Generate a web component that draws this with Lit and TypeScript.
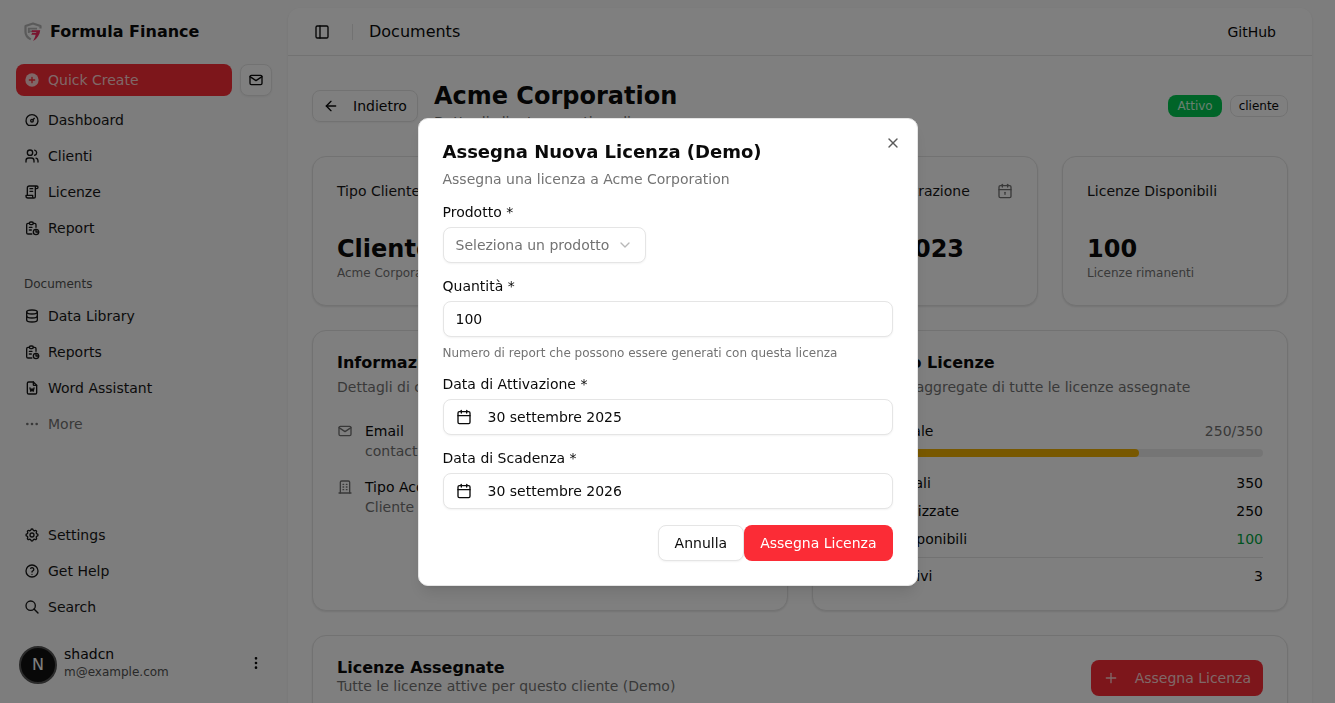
import { LitElement, html, css, svg } from 'lit';
import { customElement } from 'lit/decorators.js';

const ICONS: Record<string, string[]> = {
  mail: ['M5 5h14a2 2 0 0 1 2 2v10a2 2 0 0 1 -2 2h-14a2 2 0 0 1 -2 -2v-10a2 2 0 0 1 2 -2z', 'M3 7l9 6l9 -6'],
  dashboard: ['M12 13m-2 0a2 2 0 1 0 4 0a2 2 0 1 0 -4 0', 'M13.45 11.55l2.05 -2.05', 'M6.4 20a9 9 0 1 1 11.2 0z'],
  users: ['M9 7m-4 0a4 4 0 1 0 8 0a4 4 0 1 0 -8 0', 'M3 21v-2a4 4 0 0 1 4 -4h4a4 4 0 0 1 4 4v2', 'M16 3.13a4 4 0 0 1 0 7.75', 'M21 21v-2a4 4 0 0 0 -3 -3.85'],
  license: ['M15 21h-9a3 3 0 0 1 -3 -3v-1h10v2a2 2 0 0 0 4 0v-14a2 2 0 1 1 2 2h-2m2 -4h-11a3 3 0 0 0 -3 3v11', 'M9 7l4 0', 'M9 11l4 0'],
  report: ['M8 5h-2a2 2 0 0 0 -2 2v12a2 2 0 0 0 2 2h5.697', 'M18 14v4h4', 'M18 11v-4a2 2 0 0 0 -2 -2h-2', 'M8 3m0 2a2 2 0 0 1 2 -2h2a2 2 0 0 1 2 2v0a2 2 0 0 1 -2 2h-2a2 2 0 0 1 -2 -2z', 'M18 18m-4 0a4 4 0 1 0 8 0a4 4 0 1 0 -8 0', 'M8 11h4', 'M8 15h3'],
  database: ['M12 6m-8 0a8 3 0 1 0 16 0a8 3 0 1 0 -16 0', 'M4 6v6a8 3 0 0 0 16 0v-6', 'M4 12v6a8 3 0 0 0 16 0v-6'],
  word: ['M14 3v4a1 1 0 0 0 1 1h4', 'M17 21h-10a2 2 0 0 1 -2 -2v-14a2 2 0 0 1 2 -2h7l5 5v11a2 2 0 0 1 -2 2z', 'M9 12l1.333 5l1.667 -4l1.667 4l1.333 -5'],
  dots: ['M5 12m-1 0a1 1 0 1 0 2 0a1 1 0 1 0 -2 0', 'M12 12m-1 0a1 1 0 1 0 2 0a1 1 0 1 0 -2 0', 'M19 12m-1 0a1 1 0 1 0 2 0a1 1 0 1 0 -2 0'],
  dotsV: ['M12 5m-1 0a1 1 0 1 0 2 0a1 1 0 1 0 -2 0', 'M12 12m-1 0a1 1 0 1 0 2 0a1 1 0 1 0 -2 0', 'M12 19m-1 0a1 1 0 1 0 2 0a1 1 0 1 0 -2 0'],
  settings: ['M10.325 4.317c.426 -1.756 2.924 -1.756 3.35 0a1.724 1.724 0 0 0 2.573 1.066c1.543 -.94 3.31 .826 2.37 2.37a1.724 1.724 0 0 0 1.065 2.572c1.756 .426 1.756 2.924 0 3.35a1.724 1.724 0 0 0 -1.066 2.573c.94 1.543 -.826 3.31 -2.37 2.37a1.724 1.724 0 0 0 -2.572 1.065c-.426 1.756 -2.924 1.756 -3.35 0a1.724 1.724 0 0 0 -2.573 -1.066c-1.543 .94 -3.31 -.826 -2.37 -2.37a1.724 1.724 0 0 0 -1.065 -2.572c-1.756 -.426 -1.756 -2.924 0 -3.35a1.724 1.724 0 0 0 1.066 -2.573c-.94 -1.543 .826 -3.31 2.37 -2.37c1 .608 2.296 .07 2.572 -1.065z', 'M9 12a3 3 0 1 0 6 0a3 3 0 0 0 -6 0'],
  help: ['M12 12m-9 0a9 9 0 1 0 18 0a9 9 0 1 0 -18 0', 'M12 17l0 .01', 'M12 13.5a1.5 1.5 0 0 1 1 -1.5a2.6 2.6 0 1 0 -3 -4'],
  search: ['M10 10m-7 0a7 7 0 1 0 14 0a7 7 0 1 0 -14 0', 'M21 21l-6 -6'],
  panel: ['M5 3h14a2 2 0 0 1 2 2v14a2 2 0 0 1 -2 2h-14a2 2 0 0 1 -2 -2v-14a2 2 0 0 1 2 -2z', 'M9 3v18'],
  arrowLeft: ['m12 19-7-7 7-7', 'M19 12H5'],
  x: ['M18 6 6 18', 'm6 6 12 12'],
  calendar: ['M8 2v4', 'M16 2v4', 'M5 4h14a2 2 0 0 1 2 2v14a2 2 0 0 1 -2 2h-14a2 2 0 0 1 -2 -2v-14a2 2 0 0 1 2 -2z', 'M3 10h18'],
  calendarDay: ['M8 2v4', 'M16 2v4', 'M5 4h14a2 2 0 0 1 2 2v14a2 2 0 0 1 -2 2h-14a2 2 0 0 1 -2 -2v-14a2 2 0 0 1 2 -2z', 'M3 10h18', 'M12 14v3'],
  chevron: ['m6 9 6 6 6-6'],
  building: ['M3 21l18 0', 'M9 8l1 0', 'M9 12l1 0', 'M9 16l1 0', 'M14 8l1 0', 'M14 12l1 0', 'M14 16l1 0', 'M5 21v-16a2 2 0 0 1 2 -2h10a2 2 0 0 1 2 2v16'],
  plus: ['M5 12h14', 'M12 5v14'],
};

const icon = (name: string, size = 16, width = 2) => html`
  <svg class="icon" width=${size} height=${size} viewBox="0 0 24 24" fill="none" stroke="currentColor"
    stroke-width=${width} stroke-linecap="round" stroke-linejoin="round">
    ${ICONS[name].map((d) => svg`<path d=${d}></path>`)}
  </svg>
`;

const NAV_MAIN = [
  ['dashboard', 'Dashboard'],
  ['users', 'Clienti'],
  ['license', 'Licenze'],
  ['report', 'Report'],
];
const NAV_DOCS = [
  ['database', 'Data Library'],
  ['report', 'Reports'],
  ['word', 'Word Assistant'],
];
const NAV_FOOT = [
  ['settings', 'Settings'],
  ['help', 'Get Help'],
  ['search', 'Search'],
];

const STATS = [
  { title: 'Tipo Cliente', value: 'Cliente', note: 'Acme Corporation', icon: 'users' },
  { title: 'Licenze Totali', value: '350', note: 'Licenze assegnate', icon: 'license' },
  { title: 'Data Registrazione', value: 'Mar 2023', note: 'Cliente dal', icon: 'calendarDay' },
  { title: 'Licenze Disponibili', value: '100', note: 'Licenze rimanenti', icon: '' },
];

@customElement('app-root')
export class AppRoot extends LitElement {
  static styles = css`
    :host {
      display: block;
      height: 703px;
      overflow: hidden;
      position: relative;
      font-family: 'DejaVu Sans', sans-serif;
      font-size: 14px;
      line-height: 20px;
      color: #0a0a0a;
      background: #fafafa;
    }

    * { box-sizing: border-box; }
    .icon { flex: none; display: block; }

    .shell { display: flex; height: 703px; }

    /* sidebar */
    .sidebar {
      width: 288px;
      flex: none;
      display: flex;
      flex-direction: column;
      padding: 16px;
    }
    .brand {
      display: flex;
      align-items: center;
      gap: 7px;
      height: 30px;
      padding: 2px 0 0 7px;
      font-size: 16px;
      font-weight: 700;
    }
    .quick {
      display: flex;
      gap: 8px;
      margin-top: 18px;
      margin-bottom: 8px;
    }
    .quick-btn {
      flex: 1;
      height: 32px;
      display: flex;
      align-items: center;
      gap: 8px;
      padding-left: 8px;
      border-radius: 8px;
      background: #fb2c36;
    }
    .quick-btn span { color: #ffd0d0; }
    .mail-btn {
      width: 32px;
      height: 32px;
      display: grid;
      place-items: center;
      border: 1px solid #e5e5e5;
      border-radius: 8px;
      background: #fff;
      box-shadow: 0 1px 2px rgba(0, 0, 0, 0.05);
    }
    .nav { display: flex; flex-direction: column; gap: 4px; }
    .nav-item {
      height: 32px;
      display: flex;
      align-items: center;
      gap: 8px;
      padding-left: 8px;
      color: #171717;
    }
    .nav-item.muted { color: #737373; }
    .group-label {
      margin-top: 24px;
      height: 32px;
      padding-left: 8px;
      display: flex;
      align-items: center;
      font-size: 12px;
      color: #525252;
    }
    .spacer { flex: 1; }
    .user {
      display: flex;
      align-items: center;
      gap: 7px;
      height: 48px;
      margin-top: 18px;
      margin-bottom: -2px;
      padding-left: 3px;
    }
    .avatar {
      width: 38px;
      height: 38px;
      flex: none;
      display: grid;
      place-items: center;
      border-radius: 50%;
      background: #111;
      border: 2px solid #555;
      color: #fff;
      font-size: 16px;
    }
    .user-text { flex: 1; min-width: 0; margin-top: -4px; }
    .user-name { line-height: 18px; }
    .user-mail { font-size: 12px; line-height: 18px; color: #525252; }
    .user-dots { margin-right: 8px; margin-top: -4px; }

    /* main area */
    .main {
      width: 1024px;
      flex: none;
      margin: 8px 0 0;
      background: #fff;
      border-radius: 12px 12px 0 0;
      box-shadow: 0 1px 2px rgba(0, 0, 0, 0.1);
      overflow: hidden;
    }
    .topbar {
      height: 48px;
      display: flex;
      align-items: center;
      padding: 0 36px 0 26px;
      border-bottom: 1px solid #e5e5e5;
      font-size: 16px;
    }
    .sep { width: 1px; height: 16px; background: #e5e5e5; margin: 0 16px 0 22px; }
    .github { margin-left: auto; font-size: 14px; }

    .content {
      padding: 24px;
      display: flex;
      flex-direction: column;
      gap: 24px;
    }
    .page-head { display: flex; align-items: center; gap: 16px; }
    .back {
      height: 32px;
      display: flex;
      align-items: center;
      gap: 14px;
      padding: 0 10px;
      border: 1px solid #e5e5e5;
      border-radius: 8px;
      box-shadow: 0 1px 2px rgba(0, 0, 0, 0.05);
    }
    .page-title { font-size: 24px; line-height: 32px; font-weight: 700; }
    .page-sub { color: #737373; }
    .badges { margin-left: auto; display: flex; gap: 8px; }
    .badge {
      height: 22px;
      display: flex;
      align-items: center;
      padding: 0 8px;
      font-size: 12px;
      border-radius: 8px;
      border: 1px solid #e5e5e5;
    }
    .badge.active { background: #00c950; border-color: transparent; color: #d0ffe0; }

    .card {
      border: 1px solid #e5e5e5;
      border-radius: 14px;
      background: #fff;
      box-shadow: 0 1px 2px rgba(0, 0, 0, 0.1);
      padding: 24px;
    }
    .stats { display: grid; grid-template-columns: repeat(4, 1fr); gap: 24px; }
    .stat { height: 150px; }
    .stat-head { display: flex; justify-content: space-between; align-items: center; color: #171717; }
    .stat-head .icon { color: #737373; }
    .stat-value { margin-top: 32px; font-size: 24px; line-height: 32px; font-weight: 700; }
    .stat-note { font-size: 12px; line-height: 16px; color: #737373; }

    .split { display: grid; grid-template-columns: 1fr 1fr; gap: 24px; }
    .split .card { height: 281px; }
    .card-title { font-size: 16px; line-height: 24px; font-weight: 700; margin-top: -4px; }
    .card-sub { color: #737373; margin-top: 2px; }
    .info { display: flex; gap: 12px; margin-top: 24px; }
    .info + .info { margin-top: 16px; }
    .info .icon { color: #737373; margin-top: 2px; }
    .info-value { color: #737373; }
    .info-list { margin-top: 1px; }

    .row { display: flex; justify-content: space-between; }
    .usage { margin-top: 24px; }
    .usage .row span:last-child { color: #737373; }
    .track {
      height: 8px;
      margin: 8px 0 16px;
      border-radius: 4px;
      background: #ebebeb;
      overflow: hidden;
    }
    .fill { height: 100%; background: #f0b100; border-radius: 4px; }
    .stat-rows { display: flex; flex-direction: column; gap: 8px; }
    .green { color: #00a63e; }
    .divider { height: 1px; background: #e5e5e5; margin: 8px 0; }

    .assigned { display: flex; justify-content: space-between; align-items: flex-start; }
    .assigned-title { font-size: 16px; line-height: 20px; font-weight: 700; margin-top: -2px; }
    .assigned-sub { color: #737373; line-height: 18px; margin-top: -1px; }
    .assign-btn {
      height: 36px;
      display: flex;
      align-items: center;
      gap: 16px;
      padding: 0 12px;
      border-radius: 8px;
      background: #fb2c36;
      color: #ffd0d0;
    }

    /* dialog */
    .overlay {
      position: fixed;
      inset: 0;
      display: grid;
      place-items: center;
      background: rgba(0, 0, 0, 0.5);
    }
    .dialog {
      position: relative;
      width: 500px;
      padding: 24px;
      border: 1px solid #e5e5e5;
      border-radius: 10px;
      background: #fff;
      box-shadow: 0 10px 15px -3px rgba(0, 0, 0, 0.1), 0 4px 6px -4px rgba(0, 0, 0, 0.1);
      display: flex;
      flex-direction: column;
      gap: 16px;
    }
    .close { position: absolute; top: 16px; right: 16px; color: #5a5a5a; }
    .dialog-title { font-size: 18px; line-height: 18px; font-weight: 700; }
    .dialog-sub { margin-top: 8px; color: #737373; }
    .field { display: flex; flex-direction: column; gap: 8px; }
    .field label { line-height: 14px; }
    .control {
      height: 36px;
      display: flex;
      align-items: center;
      border: 1px solid #e5e5e5;
      border-radius: 8px;
      background: #fff;
      box-shadow: 0 1px 2px rgba(0, 0, 0, 0.05);
      padding: 0 12px;
    }
    .control.select { align-self: flex-start; gap: 8px; color: #737373; }
    .control.select .icon { opacity: 0.5; }
    .control.date { gap: 16px; }
    .hint { font-size: 12px; line-height: 16px; color: #737373; }
    .actions { display: flex; justify-content: flex-end; }
    .btn {
      height: 36px;
      display: flex;
      align-items: center;
      padding: 0 16px;
      border-radius: 8px;
    }
    .btn.outline {
      border: 1px solid #e5e5e5;
      background: #fff;
      box-shadow: 0 1px 2px rgba(0, 0, 0, 0.05);
    }
    .btn.primary { background: #fb2c36; color: #fff; }
  `;

  private renderLogo() {
    return html`
      <svg class="icon" width="20" height="20" viewBox="0 0 20 20" fill="none">
        <path d="M17.5 6.5 V4 L10 1.5 L2.5 4 V10 C2.5 13.5 4.8 15.8 7.8 17.4" stroke="#b4b4b4" stroke-width="2.2" stroke-linejoin="round"></path>
        <path d="M5.8 11 V6.6 H14 M5.8 9.4 H10" stroke="#b4b4b4" stroke-width="1.8"></path>
        <path d="M9 8.2 H17.2 C16.8 12.6 14.4 16.4 10.2 19 C11.2 16.6 12.4 14.6 12.6 12.8 H8.2 L9.2 10.8 H13 L13.5 10 H8.4 Z" fill="#f02a60"></path>
      </svg>
    `;
  }

  private renderNav(items: string[][]) {
    return items.map(([name, label]) => html`
      <div class="nav-item">${icon(name)}<span>${label}</span></div>
    `);
  }

  private renderSidebar() {
    return html`
      <aside class="sidebar">
        <div class="brand">${this.renderLogo()}<span>Formula Finance</span></div>
        <div class="quick">
          <div class="quick-btn">
            <svg class="icon" width="16" height="16" viewBox="0 0 24 24">
              <circle cx="12" cy="12" r="10" fill="#ffd0d0"></circle>
              <path d="M12 8v8M8 12h8" stroke="#fb2c36" stroke-width="2" stroke-linecap="round"></path>
            </svg>
            <span>Quick Create</span>
          </div>
          <div class="mail-btn">${icon('mail')}</div>
        </div>
        <nav class="nav">${this.renderNav(NAV_MAIN)}</nav>
        <div class="group-label">Documents</div>
        <nav class="nav">
          ${this.renderNav(NAV_DOCS)}
          <div class="nav-item muted">${icon('dots')}<span>More</span></div>
        </nav>
        <div class="spacer"></div>
        <nav class="nav">${this.renderNav(NAV_FOOT)}</nav>
        <div class="user">
          <div class="avatar">N</div>
          <div class="user-text">
            <div class="user-name">shadcn</div>
            <div class="user-mail">m@example.com</div>
          </div>
          <div class="user-dots">${icon('dotsV')}</div>
        </div>
      </aside>
    `;
  }

  private renderDialog() {
    return html`
      <div class="overlay">
        <div class="dialog">
          <div class="close">${icon('x')}</div>
          <div>
            <div class="dialog-title">Assegna Nuova Licenza (Demo)</div>
            <div class="dialog-sub">Assegna una licenza a Acme Corporation</div>
          </div>
          <div class="field">
            <label>Prodotto *</label>
            <div class="control select"><span>Seleziona un prodotto</span>${icon('chevron')}</div>
          </div>
          <div class="field">
            <label>Quantità *</label>
            <div class="control">100</div>
            <div class="hint">Numero di report che possono essere generati con questa licenza</div>
          </div>
          <div class="field">
            <label>Data di Attivazione *</label>
            <div class="control date">${icon('calendar')}<span>30 settembre 2025</span></div>
          </div>
          <div class="field">
            <label>Data di Scadenza *</label>
            <div class="control date">${icon('calendar')}<span>30 settembre 2026</span></div>
          </div>
          <div class="actions">
            <div class="btn outline">Annulla</div>
            <div class="btn primary">Assegna Licenza</div>
          </div>
        </div>
      </div>
    `;
  }

  render() {
    const used = Math.round((250 / 350) * 100);
    return html`
      <div class="shell">
        ${this.renderSidebar()}
        <main class="main">
          <header class="topbar">
            ${icon('panel')}
            <div class="sep"></div>
            <span>Documents</span>
            <span class="github">GitHub</span>
          </header>
          <div class="content">
            <div class="page-head">
              <div class="back">${icon('arrowLeft')}<span>Indietro</span></div>
              <div>
                <div class="page-title">Acme Corporation</div>
                <div class="page-sub">Dettagli cliente e gestione licenze</div>
              </div>
              <div class="badges">
                <div class="badge active">Attivo</div>
                <div class="badge">cliente</div>
              </div>
            </div>

            <section class="stats">
              ${STATS.map((s) => html`
                <div class="card stat">
                  <div class="stat-head"><span>${s.title}</span>${s.icon ? icon(s.icon, 16) : ''}</div>
                  <div class="stat-value">${s.value}</div>
                  <div class="stat-note">${s.note}</div>
                </div>
              `)}
            </section>

            <section class="split">
              <div class="card">
                <div class="card-title">Informazioni Cliente</div>
                <div class="card-sub">Dettagli di contatto del cliente</div>
                <div class="info-list">
                  <div class="info">
                    ${icon('mail')}
                    <div><div>Email</div><div class="info-value">contact@acme.com</div></div>
                  </div>
                  <div class="info">
                    ${icon('building')}
                    <div><div>Tipo Account</div><div class="info-value">Cliente</div></div>
                  </div>
                </div>
              </div>
              <div class="card">
                <div class="card-title">Riepilogo Licenze</div>
                <div class="card-sub">Statistiche aggregate di tutte le licenze assegnate</div>
                <div class="usage">
                  <div class="row"><span>Utilizzo Totale</span><span>250/350</span></div>
                  <div class="track"><div class="fill" style="width:${used}%"></div></div>
                </div>
                <div class="stat-rows">
                  <div class="row"><span>Licenze Totali</span><span>350</span></div>
                  <div class="row"><span>Licenze Utilizzate</span><span>250</span></div>
                  <div class="row"><span>Licenze Disponibili</span><span class="green">100</span></div>
                </div>
                <div class="divider"></div>
                <div class="row"><span>Prodotti Attivi</span><span>3</span></div>
              </div>
            </section>

            <section class="card assigned">
              <div>
                <div class="assigned-title">Licenze Assegnate</div>
                <div class="assigned-sub">Tutte le licenze attive per questo cliente (Demo)</div>
              </div>
              <div class="assign-btn">${icon('plus')}<span>Assegna Licenza</span></div>
            </section>
          </div>
        </main>
      </div>
      ${this.renderDialog()}
    `;
  }
}
